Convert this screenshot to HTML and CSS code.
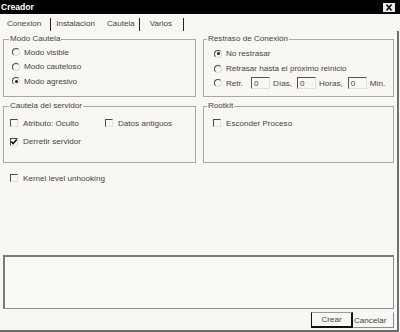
FILE: index.html
```html
<!DOCTYPE html>
<html lang="es">
<head>
    <meta charset="UTF-8">
    <title>Creador</title>
    <link rel="stylesheet" href="styles.css">
</head>
<body>
    <div class="dialog">
        <div class="titlebar">
            <span class="title">Creador</span>
            <span class="close">
                <svg width="12" height="9" viewBox="0 0 12 9"><path d="M3.5 1.5 L8.5 7.5 M8.5 1.5 L3.5 7.5" stroke="#111" stroke-width="1.6" fill="none"/></svg>
            </span>
        </div>

        <div class="tabs">
            <span class="tab tab-first sep">Conexion</span>
            <span class="tab">Instalacion</span>
            <span class="tab active sep">Cautela</span>
            <span class="tab tab-last sep">Varios</span>
        </div>

        <div class="panel">
            <div class="groups">
                <fieldset class="group">
                    <legend>Modo Cautela</legend>
                    <div class="opts radios">
                        <div class="opt"><span class="radio"></span>Modo visible</div>
                        <div class="opt"><span class="radio"></span>Modo cauteloso</div>
                        <div class="opt"><span class="radio on"></span>Modo agresivo</div>
                    </div>
                </fieldset>

                <fieldset class="group group-right">
                    <legend>Restraso de Conexión</legend>
                    <div class="opts radios radios-right">
                        <div class="opt"><span class="radio on"></span>No restrasar</div>
                        <div class="opt"><span class="radio"></span>Retrasar hasta el próximo reinicio</div>
                        <div class="opt">
                            <span class="radio"></span><span class="retr">Retr.</span>
                            <span class="num">0</span><span class="unit">Días,</span>
                            <span class="num">0</span><span class="unit">Horas,</span>
                            <span class="num">0</span><span class="unit">Min.</span>
                        </div>
                    </div>
                </fieldset>

                <fieldset class="group">
                    <legend>Cautela del servidor</legend>
                    <div class="opts checks">
                        <div class="opt-row">
                            <div class="opt attr"><span class="check"></span>Atributo: Oculto</div>
                            <div class="opt"><span class="check"></span>Datos antiguos</div>
                        </div>
                        <div class="opt"><span class="check on"><svg width="8" height="8" viewBox="0 0 8 8"><path d="M1.2 3.6 L3.1 5.6 L6.8 1.6" stroke="#111" stroke-width="1.5" fill="none"/></svg></span>Derretir servidor</div>
                    </div>
                </fieldset>

                <fieldset class="group group-right">
                    <legend>Rootkit</legend>
                    <div class="opts checks checks-right">
                        <div class="opt"><span class="check"></span>Esconder Proceso</div>
                    </div>
                </fieldset>
            </div>

            <div class="opt kernel"><span class="check"></span>Kernel level unhooking</div>

            <div class="log"></div>

            <div class="buttons">
                <button class="btn btn-default">Crear</button>
                <button class="btn btn-cancel">Cancelar</button>
            </div>
        </div>
    </div>
</body>
</html>
```

FILE: styles.css
```css
body {
    margin: 0;
    background: #f8f7f4;
    font-family: "Liberation Sans", Arial, sans-serif;
    font-size: 8.1px;
    color: #444;
}

.dialog {
    width: 400px;
    height: 332px;
    display: flex;
    flex-direction: column;
}

.titlebar {
    height: 14px;
    background: #000;
    display: flex;
    align-items: center;
    justify-content: space-between;
    padding: 0 5px 0 1px;
}

.title {
    color: #fff;
    font-weight: bold;
    font-size: 8.6px;
}

.close {
    width: 12px;
    height: 9px;
    background: #ecebe6;
    display: flex;
}

.tabs {
    height: 17px;
    display: flex;
    align-items: flex-end;
}

.tab {
    height: 13px;
    line-height: 12px;
    padding: 0 4px 0 5px;
}

.tab.sep {
    border-right: 1px solid #222;
}

.tab-first {
    padding: 0 9px 0 7px;
}

.tab.active {
    padding: 0 4px 0 8px;
}

.tab-last {
    padding: 0 11px 0 10px;
}

.panel {
    flex: 1;
    display: flex;
    flex-direction: column;
    padding: 3px 3px 2px 3px;
    border-right: 2px solid #6f6f6f;
    border-bottom: 2px solid #6a6a6a;
    width: 399px;
    box-sizing: border-box;
}

.groups {
    display: grid;
    grid-template-columns: 193px 191px;
    grid-template-rows: 63px 62px;
    column-gap: 7px;
    row-gap: 4px;
}

.group {
    margin: 0;
    padding: 0;
    border: 1px solid #aca89f;
    box-sizing: border-box;
    min-width: 0;
}

.group legend {
    padding: 0 1px;
    margin-left: 5px;
    line-height: 10px;
}

.group-right legend {
    margin-left: 3px;
}

.opts {
    padding: 1px 0 0 8px;
}

.radios .opt {
    height: 14.5px;
}

.radios-right {
    padding: 2.5px 0 0 10px;
}

.radios-right .opt {
    height: 14.8px;
}

.opt {
    display: flex;
    align-items: center;
    white-space: nowrap;
}

.radio {
    width: 8px;
    height: 8px;
    border-radius: 50%;
    border: 1.5px solid;
    border-color: #4a4a4a #dedbd3 #dedbd3 #4a4a4a;
    box-sizing: border-box;
    margin-right: 4px;
    flex: none;
    display: flex;
    align-items: center;
    justify-content: center;
}

.radio.on::after {
    content: '';
    width: 3px;
    height: 3px;
    border-radius: 50%;
    background: #222;
}

.retr {
    margin-right: 8px;
}

.num {
    width: 19px;
    height: 12px;
    line-height: 11px;
    box-sizing: border-box;
    border: 1px solid #e2e0da;
    border-top: 1.5px solid #555;
    border-left: 1.5px solid #555;
    padding-left: 2px;
    margin-right: 3px;
}

.unit {
    margin-right: 5px;
}

.checks {
    padding: 5px 0 0 6px;
    display: flex;
    flex-direction: column;
    gap: 4.5px;
}

.checks .opt {
    height: 14px;
}

.checks-right {
    padding-left: 9px;
}

.opt-row {
    display: flex;
}

.attr {
    width: 95px;
}

.check {
    width: 8px;
    height: 8px;
    box-sizing: border-box;
    border: 1.5px solid;
    border-color: #4a4a4a #e2e0da #e2e0da #4a4a4a;
    margin-right: 5px;
    flex: none;
    display: flex;
    align-items: center;
    justify-content: center;
}

.check svg {
    margin: -1.5px;
}

.kernel {
    height: 14px;
    margin: 8px 0 0 7px;
}

.log {
    margin-top: auto;
    height: 54px;
    box-sizing: border-box;
    border: 1px solid #8c8c8c;
    border-top: 2px solid #7a7a7a;
    border-left: 2px solid #7a7a7a;
    background: #faf9f6;
}

.buttons {
    display: flex;
    justify-content: flex-end;
    margin-top: 3px;
}

.btn {
    width: 42px;
    height: 16px;
    padding: 0;
    font-family: inherit;
    font-size: 8.1px;
    color: #444;
    background: #f8f7f4;
    border: 1px solid #d6d3cc;
    box-sizing: border-box;
}

.btn-default {
    border: 1px solid #111;
    border-top-color: #9a9a9a;
    border-bottom-width: 2px;
    border-right-width: 2px;
}

.btn-cancel {
    width: 41px;
    text-align: left;
    padding-left: 0;
    border-color: #f8f7f4 #8c8c8c #8c8c8c #f8f7f4;
}
```
